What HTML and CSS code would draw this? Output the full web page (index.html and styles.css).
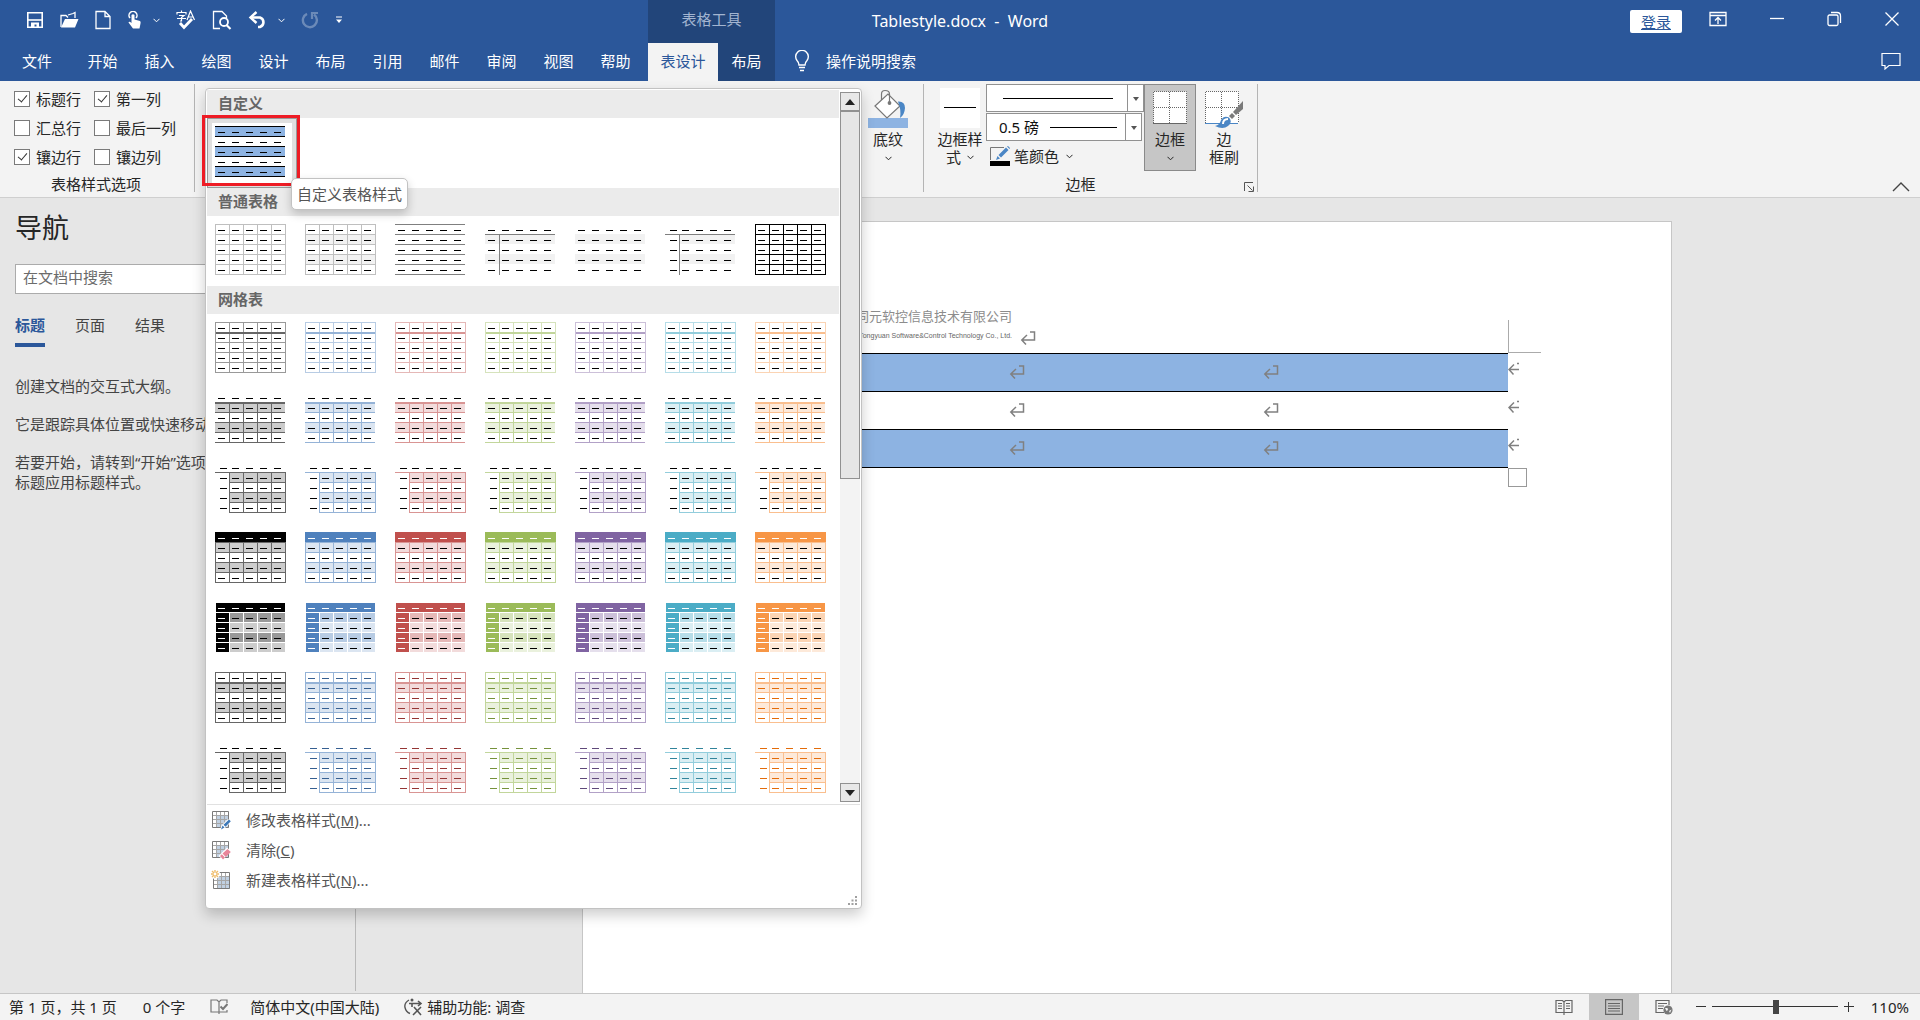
FILE: index.html
```html
<!DOCTYPE html>
<html lang="zh-CN">
<head>
    <meta charset="UTF-8">
    <meta name="viewport" content="width=device-width, initial-scale=1.0">
    <title>Tablestyle.docx - Word</title>
    <link rel="stylesheet" href="styles.css">
</head>
<body>
    <svg class="defs" aria-hidden="true">
        <symbol id="chev" viewBox="0 0 7 5"><path d="M0.5 0.8 L3.5 3.8 L6.5 0.8" fill="none" stroke="currentColor" stroke-width="1"/></symbol>
        <symbol id="ret" viewBox="0 0 16 14"><path d="M10 1 H14.5 V9 H2 M7 4 L1.8 9 L6 13.5" fill="none" stroke="#808080" stroke-width="1.5"/></symbol>
        <symbol id="rowend" viewBox="0 0 12 14"><path d="M11 7.5 H1.5 M6 2.5 L1 7.5 L5.5 12.5 M9 1.5 H11" fill="none" stroke="#808080" stroke-width="1.5"/></symbol>
        <symbol id="grid" viewBox="0 0 20 20">
            <path d="M1 1 H18 V18 H1 Z" fill="#fff"/>
            <path d="M5.500 5.500 H18 V18 H5.500 Z" fill="#c0d0e2"/>
            <path d="M1.500 5.500 H17 M1.500 9.500 H17 M1.500 13.500 H17 M5.500 1.500 V17 M9.500 1.500 V17 M13.500 1.500 V17" stroke="#a6a6a6" fill="none"/>
            <path d="M1.500 1.500 H17.500 V17.500 H1.500 Z" stroke="#7a7a7a" fill="none"/>
        </symbol>
    </svg>

    <div class="app">
        <header class="header">
            <div class="titlebar">
                <div class="title-left">
                    <div class="qat">
                        <button aria-label="保存"><svg width="18" height="18" viewBox="0 0 18 18"><path d="M1.800 1.800 H16.200 V16.200 H1.800 Z" fill="none" stroke="#fff" stroke-width="1.600"/><path d="M2 9 H16" stroke="#fff" stroke-width="1.600"/><path d="M5 17 V11.500 H13 V17 H10.500 V13.500 H8.500 V17 Z" fill="#fff"/></svg></button>
                        <button aria-label="打开"><svg width="19" height="18" viewBox="0 0 19 18"><path d="M1 16 V4.500 H6 L8 6.500 M8 4 L13 2.500 L15 1.500 V7" fill="none" stroke="#fff" stroke-width="1.300"/><path d="M1 16.500 L5 8 H18.500 L15 16.500 Z" fill="#fff"/></svg></button>
                        <button aria-label="新建"><svg width="16" height="20" viewBox="0 0 16 20"><path d="M1 1.500 H10 L15 6.500 V18.500 H1 Z M10 1.500 V6.500 H15" fill="none" stroke="#fff" stroke-width="1.300"/></svg></button>
                        <button class="split" aria-label="触摸/鼠标模式"><svg width="16" height="18" viewBox="0 0 16 18"><path d="M3 7 A4 4 0 1 1 9 7" fill="none" stroke="#fff" stroke-width="1.500"/><path d="M4.500 4 Q6 2.500 7.500 4 V8.500 L13 10 Q14 10.500 13.500 12.500 L12.500 17.500 H6 L1.500 11.500 Q2 10 4.500 12 Z" fill="#fff"/></svg><svg class="chev" width="7" height="5"><use href="#chev"/></svg></button>
                        <button aria-label="拼写和语法"><svg width="20" height="20" viewBox="0 0 20 20"><path d="M1 4.500 V2.500 H10 V4.500 M5.500 0.500 V2.500 M3 5.500 H8 L5.500 7.500 V11 H4 M1 8.500 H10 M11 10 L14.500 1 L18.500 10 M12 7 H17" fill="none" stroke="#fff" stroke-width="1.200"/><path d="M4 13 L8 17.500 L16 9" fill="none" stroke="#fff" stroke-width="2.800"/></svg></button>
                        <button aria-label="打印预览"><svg width="20" height="20" viewBox="0 0 20 20"><path d="M8 18.500 H1.500 V1.500 H10 L14.500 6 V8" fill="none" stroke="#fff" stroke-width="1.300"/><circle cx="12" cy="12" r="4" fill="none" stroke="#fff" stroke-width="1.800"/><path d="M14.500 15 L18.500 19" stroke="#fff" stroke-width="2.200"/></svg></button>
                        <button class="split" aria-label="撤消"><svg width="20" height="18" viewBox="0 0 20 18"><path d="M3 6.500 H12 A5 5 0 0 1 12 16 H10" fill="none" stroke="#fff" stroke-width="2.600"/><path d="M8.500 1 L2.500 6.500 L8.500 12" fill="none" stroke="#fff" stroke-width="2.400"/></svg><svg class="chev" width="7" height="5"><use href="#chev"/></svg></button>
                        <button class="dim" aria-label="恢复"><svg width="18" height="18" viewBox="0 0 18 18"><path d="M6 2.800 A7 7 0 1 0 13 3.500" fill="none" stroke="#fff" stroke-width="2.400"/><path d="M11 8 V2 H17" fill="none" stroke="#fff" stroke-width="2.200"/></svg></button>
                        <button aria-label="自定义快速访问工具栏"><svg width="8" height="8" viewBox="0 0 8 8"><path d="M1 1 H7" stroke="#fff"/><path d="M1 3.500 H7 L4 7 Z" fill="#fff"/></svg></button>
                    </div>
                    <div class="context-title">表格工具</div>
                </div>
                <div class="doc-title">Tablestyle.docx&nbsp; -&nbsp; Word</div>
                <div class="window-controls">
                    <button class="login">登录</button>
                    <button aria-label="功能区显示选项"><svg width="18" height="16" viewBox="0 0 18 16"><path d="M1 1.500 H17 V14.500 H1 Z M1 4.500 H17" fill="none" stroke="#fff" stroke-width="1.300"/><path d="M9 13 V7 M6 9.500 L9 6.500 L12 9.500" fill="none" stroke="#fff" stroke-width="1.300"/></svg></button>
                    <button aria-label="最小化"><svg width="14" height="14" viewBox="0 0 14 14"><path d="M0 6.500 H14" stroke="#fff" stroke-width="1.300"/></svg></button>
                    <button aria-label="还原"><svg width="15" height="16" viewBox="0 0 15 16"><rect x="1" y="4" width="10" height="10.500" rx="1.500" fill="none" stroke="#fff" stroke-width="1.300"/><path d="M4 1.500 H10 Q13.500 1.500 13.500 5 V12" fill="none" stroke="#fff" stroke-width="1.300"/></svg></button>
                    <button aria-label="关闭"><svg width="14" height="14" viewBox="0 0 14 14"><path d="M0.500 0.500 L13.500 13.500 M13.500 0.500 L0.500 13.500" stroke="#fff" stroke-width="1.300"/></svg></button>
                </div>
            </div>
            <nav class="tabs">
                <button class="file">文件</button>
                <button>开始</button>
                <button>插入</button>
                <button>绘图</button>
                <button>设计</button>
                <button>布局</button>
                <button>引用</button>
                <button>邮件</button>
                <button>审阅</button>
                <button>视图</button>
                <button>帮助</button>
                <button class="active">表设计</button>
                <button class="context">布局</button>
                <button class="tell-me"><svg width="16" height="22" viewBox="0 0 16 22"><path d="M5 15 Q5 12.500 3 10.500 A6.300 6.300 0 1 1 13 10.500 Q11 12.500 11 15 Z M5 17.500 H11 M6 20.500 H10" fill="none" stroke="#fff" stroke-width="1.400"/></svg>操作说明搜索</button>
                <button class="comment" aria-label="批注"><svg width="20" height="18" viewBox="0 0 20 18"><path d="M1 1.500 H19 V13.500 H8 L4 17 V13.500 H1 Z" fill="none" stroke="#fff" stroke-width="1.200"/></svg></button>
            </nav>
        </header>

        <section class="ribbon">
            <div class="group options">
                <div class="checks">
                    <label><input type="checkbox" checked>标题行</label>
                    <label><input type="checkbox" checked>第一列</label>
                    <label><input type="checkbox">汇总行</label>
                    <label><input type="checkbox">最后一列</label>
                    <label><input type="checkbox" checked>镶边行</label>
                    <label><input type="checkbox">镶边列</label>
                </div>
                <div class="group-name">表格样式选项</div>
            </div>

            <div class="group styles">
                <button class="big">
                    <svg width="40" height="40" viewBox="0 0 40 40"><rect y="30" width="40" height="10" fill="#8db3e2"/><path d="M7 18 L20 6 L32 18 L19 30 Z" fill="#fff" stroke="#777" stroke-width="1.200"/><path d="M13.500 12 V6 Q13.500 2.500 17 2.500 Q21.500 2.500 21.500 6 V14" fill="none" stroke="#777" stroke-width="1.200"/><circle cx="21.500" cy="15" r="1.900" fill="#777"/><path d="M30 13.500 Q37 13 37 20 Q36.500 27 32 30 Q33.500 22 30 13.500 Z" fill="#4a86c5"/></svg>
                    <span>底纹</span>
                    <svg class="chev" width="7" height="5"><use href="#chev"/></svg>
                </button>

                <div class="gallery">
                    <div class="gallery-body">
                        <div class="gallery-list">
                            <h3>自定义</h3>
                            <div class="thumbs" id="custom"></div>
                            <h3>普通表格</h3>
                            <div class="thumbs" id="plain"></div>
                            <h3>网格表</h3>
                            <div class="thumbs" id="gridTables"></div>
                        </div>
                        <div class="scrollbar">
                            <button aria-label="向上"><svg width="10" height="6" viewBox="0 0 10 6"><path d="M0 6 L5 0 L10 6 Z" fill="#222"/></svg></button>
                            <div class="scroll-thumb"></div>
                            <button aria-label="向下"><svg width="10" height="6" viewBox="0 0 10 6"><path d="M0 0 L5 6 L10 0 Z" fill="#222"/></svg></button>
                        </div>
                    </div>
                    <div class="gallery-menu">
                        <button><svg width="20" height="20" viewBox="0 0 20 20"><use href="#grid" width="20" height="20"/><path d="M9 20 L10.500 15.500 L17 9 L20 12 L13.500 18.500 Z" fill="#fff"/><path d="M10 19.500 L11.500 15.500 L13.500 17.500 Z M12.500 14.700 L18 9.500 L19.800 11.300 L14.500 16.800 Z" fill="#3c78b8"/></svg><span>修改表格样式(<u>M</u>)...</span></button>
                        <button><svg width="20" height="20" viewBox="0 0 20 20"><use href="#grid" width="20" height="20"/><path d="M7.500 16 L16 7.500 L20 11 L12 19.800 Z" fill="#fff"/><path d="M11.500 13.500 L16.500 9 L19.800 12 L14.800 17 Z M9 16 L10.800 14.300 L14 17.500 L12 19.500 Z" fill="#e8859a"/></svg><span>清除(<u>C</u>)</span></button>
                        <button><svg width="20" height="20" viewBox="0 0 20 20"><use href="#grid" x="1" y="1" width="20" height="20"/><circle cx="4" cy="4" r="5" fill="#fff"/><path d="M4 0 V8 M0 4 H8 M1 1 L7 7 M7 1 L1 7" stroke="#efbd6c" stroke-width="1.400"/><circle cx="4" cy="4" r="1.400" fill="#fff"/></svg><span>新建表格样式(<u>N</u>)...</span></button>
                    </div>
                    <svg class="grip" width="9" height="9" viewBox="0 0 9 9"><path d="M7 0 H9 V2 H7 Z M7 3.500 H9 V5.500 H7 Z M7 7 H9 V9 H7 Z M3.500 3.500 H5.500 V5.500 H3.500 Z M3.500 7 H5.500 V9 H3.500 Z M0 7 H2 V9 H0 Z" fill="#a0a0a0"/></svg>
                    <div class="marker"></div>
                    <div class="tooltip">自定义表格样式</div>
                </div>
            </div>

            <div class="group borders">
                <div class="border-tools">
                    <button class="big">
                        <svg width="40" height="40" viewBox="0 0 40 40"><rect width="40" height="40" fill="#fff"/><path d="M4 19.500 H36" stroke="#000"/></svg>
                        <span>边框样</span>
                        <span class="with-chev">式<svg class="chev" width="7" height="5"><use href="#chev"/></svg></span>
                    </button>
                    <div class="line-tools">
                        <div class="combo line"><select aria-label="线型"><option></option></select></div>
                        <div class="combo weight"><select aria-label="粗细"><option>0.5 磅</option></select></div>
                        <button class="pen"><svg width="20" height="20" viewBox="0 0 20 20"><path d="M14 1.500 H0.500 V14" fill="none" stroke="#777"/><path d="M6 14 L7.500 10 L10 12.500 Z M8.500 9 L16 1.500 L18.500 4 L11 11.500 Z M17 0.500 L18 0 L20 2 L19.500 3 Z" fill="#4a86c5"/><rect y="15" width="20" height="5" fill="#000"/></svg>笔颜色<svg class="chev" width="7" height="5"><use href="#chev"/></svg></button>
                    </div>
                    <button class="big pressed">
                        <svg width="34" height="40" viewBox="0 0 34 40"><path d="M0.500 3.500 H33.500 V35.500 H0.500 Z" fill="#fff"/><path d="M0.500 35 V3.500 H33.500 V35 M16.500 4 V35 M1 19.500 H33" fill="none" stroke="#666" stroke-dasharray="1 1"/><path d="M0 35.500 H34" stroke="#666"/></svg>
                        <span>边框</span>
                        <svg class="chev" width="7" height="5"><use href="#chev"/></svg>
                    </button>
                    <button class="big brush">
                        <svg width="38" height="40" viewBox="0 0 38 40"><path d="M0.500 3.500 H33.500 V35.500 H0.500 Z" fill="#fff"/><path d="M0.500 35 V3.500 H33.500 V35 M16.500 4 V35 M1 19.500 H33" fill="none" stroke="#666" stroke-dasharray="1 1"/><path d="M0 35.500 H33" stroke="#4a86c5"/><path d="M38 13 V21 L31 27 L28 24 Z" fill="#7a7a7a"/><path d="M27 25 L30 28 L27 31 L24 28 Z" fill="#7a7a7a"/><path d="M10 38 Q15 37 16 32 Q19 27 24 29.500 Q28 34 23 38 Q18 42 10 38 Z" fill="#4a86c5"/><path d="M18 36 Q18 31 23 31" fill="none" stroke="#fff" stroke-width="2"/></svg>
                        <span>边</span>
                        <span>框刷</span>
                    </button>
                </div>
                <div class="group-name">边框</div>
                <button class="launcher" aria-label="边框和底纹"><svg width="10" height="10" viewBox="0 0 10 10"><path d="M0.500 9 V0.500 H9 M3.500 3.500 L8.500 8.500 M9.500 4.500 V9.500 H4.500" fill="none" stroke="#555"/></svg></button>
            </div>
            <button class="collapse" aria-label="折叠功能区"><svg width="18" height="10" viewBox="0 0 18 10"><path d="M1 9 L9 1 L17 9" fill="none" stroke="#444" stroke-width="1.400"/></svg></button>
        </section>

        <main class="workspace">
            <aside class="nav-pane">
                <h2>导航</h2>
                <input type="text" placeholder="在文档中搜索" aria-label="在文档中搜索">
                <div class="nav-tabs">
                    <button class="active">标题</button>
                    <button>页面</button>
                    <button>结果</button>
                </div>
                <p>创建文档的交互式大纲。</p>
                <p>它是跟踪具体位置或快速移动内容的最佳方式。</p>
                <p>若要开始，请转到“开始”选项卡，并向文档中的标题应用标题样式。</p>
            </aside>
            <div class="document">
                <article class="page">
                    <div class="letterhead">
                        <div class="company">
                            <div class="company-cn">苏州同元软控信息技术有限公司</div>
                            <div class="company-en">Suzhou Tongyuan Software&amp;Control Technology Co., Ltd.</div>
                        </div>
                        <svg width="16" height="14"><use href="#ret"/></svg>
                    </div>
                    <div class="table-wrap">
                        <table>
                            <tr><td><svg width="16" height="14"><use href="#ret"/></svg></td><td><svg width="16" height="14"><use href="#ret"/></svg></td><td><svg width="16" height="14"><use href="#ret"/></svg></td></tr>
                            <tr><td><svg width="16" height="14"><use href="#ret"/></svg></td><td><svg width="16" height="14"><use href="#ret"/></svg></td><td><svg width="16" height="14"><use href="#ret"/></svg></td></tr>
                            <tr><td><svg width="16" height="14"><use href="#ret"/></svg></td><td><svg width="16" height="14"><use href="#ret"/></svg></td><td><svg width="16" height="14"><use href="#ret"/></svg></td></tr>
                        </table>
                        <div class="row-ends">
                            <svg width="12" height="14"><use href="#rowend"/></svg>
                            <svg width="12" height="14"><use href="#rowend"/></svg>
                            <svg width="12" height="14"><use href="#rowend"/></svg>
                        </div>
                        <div class="margin-corner"></div>
                        <div class="resize-handle"></div>
                    </div>
                </article>
            </div>
        </main>

        <footer class="status">
            <span class="pages">第 1 页，共 1 页</span>
            <span class="words">0 个字</span>
            <svg class="proof" width="18" height="16" viewBox="0 0 18 16"><path d="M9 2 V15 M9 13 H1 V1 H7 L9 3 L11 1 H17 V4 M9 13 H17 V11" fill="none" stroke="#777" stroke-width="1.200"/><path d="M10.500 7.500 L13 10 L17.500 5" fill="none" stroke="#777" stroke-width="2"/></svg>
            <span class="lang">简体中文(中国大陆)</span>
            <span class="a11y"><svg width="20" height="18" viewBox="0 0 20 18"><path d="M5 2 Q0 5 1 9.500 Q2 14 6 15.500" fill="none" stroke="#555" stroke-width="1.400"/><circle cx="8" cy="2" r="1.500" fill="#555"/><path d="M5 5.500 H17 M14 3 L17 5.500 L14 8 M8 5 V9 M10 9 L17 17 M17 9 L9 17" fill="none" stroke="#555" stroke-width="1.600"/></svg>辅助功能: 调查</span>
            <div class="views">
                <button aria-label="阅读视图"><svg width="18" height="16" viewBox="0 0 18 16"><path d="M9 2 V16 M9 13.500 H1 V1.500 H7.500 L9 3 L10.500 1.500 H17 V13.500 H9 M3 4.500 H7 M3 7 H7 M3 9.500 H7 M11 4.500 H15 M11 7 H15 M11 9.500 H15" fill="none" stroke="#666" stroke-width="1.200"/></svg></button>
                <button class="on" aria-label="页面视图"><svg width="18" height="16" viewBox="0 0 18 16"><path d="M0.600 0.600 H17.400 V15.400 H0.600 Z M3 4.500 H15 M3 7 H15 M3 9.500 H15 M3 12 H15" fill="none" stroke="#666" stroke-width="1.200"/></svg></button>
                <button aria-label="Web 版式视图"><svg width="18" height="16" viewBox="0 0 18 16"><path d="M9 13.500 H1 V1.500 H14 V6 M3 4.500 H12 M3 7 H9 M3 9.500 H8" fill="none" stroke="#666" stroke-width="1.200"/><circle cx="13" cy="11" r="4.600" fill="#777"/><path d="M10 9 L12.500 9 L13 11 L11.500 12 Z M14 12 L16.500 10.500 L15 14 Z" fill="#f3f3f3"/></svg></button>
            </div>
            <div class="zoom">
                <button aria-label="缩小"><svg width="12" height="12" viewBox="0 0 12 12"><path d="M1 5.500 H11" stroke="#333"/></svg></button>
                <input type="range" min="0" max="100" value="51" aria-label="显示比例">
                <button aria-label="放大"><svg width="12" height="12" viewBox="0 0 12 12"><path d="M1 5.500 H11 M5.500 1 V11" stroke="#333"/></svg></button>
                <span>110%</span>
            </div>
        </footer>
    </div>

    <script src="gallery.js"></script>
</body>
</html>
```

FILE: styles.css
```css
* { box-sizing: border-box; }
body { margin: 0; font-family: "Noto Sans", "Noto Sans CJK SC", sans-serif; font-size: 15px; line-height: 20px; color: #262626; }
button { padding: 0; border: none; background: none; font: inherit; color: inherit; cursor: pointer; }
svg { display: block; flex: none; }
.defs { position: absolute; width: 0; height: 0; }
.app { display: flex; flex-direction: column; height: 100vh; overflow: hidden; background: #e6e6e6; }

/* title bar and tabs */
.header { background: #2b579a; color: white; }
.titlebar { display: grid; grid-template-columns: 1fr auto 1fr; height: 43px; }
.title-left { display: flex; }
.qat { display: flex; align-items: center; gap: 16px; width: 648px; padding: 0 0 3px 26px; }
.split { display: flex; align-items: center; gap: 10px; }
.dim { opacity: 0.3; }
.context-title { width: 127px; padding-top: 9px; background: #22457a; color: #a3b5d1; text-align: center; }
.doc-title { padding-top: 11px; font-size: 16px; }
.window-controls { display: flex; justify-content: flex-end; align-items: flex-start; gap: 43px; padding: 10px 21px 0 0; }
.window-controls button { display: flex; align-items: center; height: 18px; }
.window-controls .login { height: 23px; margin-right: -16px; padding: 0 11px; background: white; color: #2b579a; border-radius: 2px; text-decoration: underline; }
.tabs { display: flex; height: 38px; }
.tabs button { width: 57px; padding-bottom: 2px; }
.tabs .file { width: 74px; }
.tabs .active { width: 70px; margin-left: 4px; background: #f3f3f3; color: #2b579a; }
.tabs .context { background: #22457a; }
.tabs .tell-me { display: flex; align-items: center; gap: 16px; width: auto; margin-left: 19px; }
.tabs .comment { display: flex; align-items: center; width: 20px; margin: 0 19px 0 auto; }

/* ribbon */
.ribbon { display: flex; height: 117px; padding: 3px 0 5px; background: #f3f3f3; border-bottom: 1px solid #cfcfcf; }
.group { position: relative; display: flex; flex-direction: column; justify-content: space-between; border-right: 1px solid #b4b4b4; }
.group-name { text-align: center; line-height: 16px; }
.options { width: 195px; }
.checks { display: grid; grid-template-columns: 80px 1fr; row-gap: 3px; padding: 2px 0 0 14px; }
.checks label { display: flex; align-items: center; gap: 6px; height: 26px; white-space: nowrap; }
.checks input { position: relative; width: 16px; height: 16px; margin: 0; appearance: none; background: white; border: 1px solid #7a7a7a; }
.checks input:checked::after { content: ""; position: absolute; left: 5px; top: 1px; width: 4px; height: 8px; border: solid #333; border-width: 0 1px 1px 0; transform: rotate(40deg); }
.options .group-name { padding-right: 2px; }
.styles { width: 729px; align-items: flex-end; padding-right: 9px; }
.big { display: flex; flex-direction: column; align-items: center; width: 52px; height: 87px; padding-top: 4px; line-height: 18px; }
.big svg + span { margin-top: 2px; }
.big .chev { margin-top: 8px; }
.big .with-chev { display: flex; align-items: center; gap: 6px; }
.big .with-chev .chev { margin-top: 0; }
.borders { width: 334px; }
.borders .group-name { padding-right: 20px; }
.border-tools { display: flex; padding-left: 10px; }
.line-tools { display: flex; flex-direction: column; gap: 1px; width: 158px; }
.pressed { background: #c6c6c6; border: 1px solid #8a8a8a; padding-top: 3px; }
.brush { margin-left: 2px; }
.combo { position: relative; height: 28px; }
.combo.weight { width: 156px; }
.combo select { width: 100%; height: 28px; padding: 0 12px; appearance: none; border: 1px solid #919191; border-radius: 0; background: linear-gradient(#000, #000) 16px 13px / 110px 1px no-repeat, white; font: inherit; color: #111; }
.combo.weight select { background: linear-gradient(#000, #000) 63px 13px / 67px 1px no-repeat, white; }
.combo::before { content: ""; position: absolute; right: 16px; top: 0; height: 28px; border-left: 1px solid #919191; }
.combo::after { content: ""; position: absolute; right: 5px; top: 13px; border: 3px solid transparent; border-top: 4px solid #555; border-bottom: 0; }
.pen { display: flex; align-items: center; gap: 4px; height: 28px; padding-left: 4px; }
.pen .chev { margin-left: 3px; }
.launcher { position: absolute; right: 3px; bottom: 0; }
.collapse { display: flex; align-items: flex-end; margin: 0 10px 0 auto; }

/* table style gallery */
.gallery { position: absolute; left: 10px; top: 4px; z-index: 5; width: 657px; padding: 1px; background: white; border: 1px solid #c2c2c2; border-radius: 4px; box-shadow: 0 6px 14px rgba(0, 0, 0, 0.2); color: #555; }
.gallery-body { display: flex; border-bottom: 1px solid #e1e1e1; }
.gallery-list { flex: 1; }
.gallery h3 { margin: 0; padding: 0 11px 2px; background: #ebebeb; font-size: 15px; font-weight: bold; line-height: 26px; color: #666; }
.thumbs { display: grid; grid-template-columns: repeat(7, 90px); }
.thumbs button { display: flex; align-items: flex-start; height: 70px; padding: 8px; }
.thumbs .selected { padding: 3px; border: 5px solid #e0e0e0; outline: 1px solid #9a9a9a; outline-offset: -1px; }
.scrollbar { display: flex; flex-direction: column; width: 20px; margin: 2px 0 2px 1px; background: #f3f3f3; }
.scrollbar button { display: flex; align-items: center; justify-content: center; height: 19px; background: #e8e8e8; border: 1px solid #919191; }
.scroll-thumb { height: 368px; margin-bottom: auto; background: #e6e6e6; border: 1px solid #919191; }
.gallery-menu { padding-bottom: 12px; }
.gallery-menu button { display: flex; align-items: center; gap: 15px; width: 100%; height: 30px; padding-left: 4px; }
.grip { position: absolute; right: 4px; bottom: 3px; }
.marker { position: absolute; left: -4px; top: 26px; width: 98px; height: 71px; border: 3px solid #ee1c25; }
.tooltip { position: absolute; left: 85px; top: 89px; padding: 5px 5px; background: white; border: 1px solid #c2c2c2; border-radius: 5px; box-shadow: 0 4px 10px rgba(0, 0, 0, 0.2); }

/* navigation pane */
.workspace { display: flex; flex: 1; min-height: 0; }
.nav-pane { width: 356px; margin-bottom: 2px; padding: 14px 20px 0 15px; border-right: 1px solid #b9b9b9; color: #444; }
.nav-pane h2 { margin: 0 0 20px; font-size: 27px; font-weight: normal; line-height: 32px; color: #262626; }
.nav-pane input { display: block; width: 100%; height: 30px; padding: 0 7px 4px; border: 1px solid #ababab; background: white; font: inherit; }
.nav-pane input::placeholder { color: #6b6b6b; }
.nav-tabs { display: flex; gap: 30px; margin: 20px 0 29px; }
.nav-tabs button { height: 33px; padding-bottom: 12px; }
.nav-tabs .active { border-bottom: 4px solid #2b579a; color: #2b579a; font-weight: bold; padding-bottom: 8px; }
.nav-pane p { margin: 0 0 18px; }

/* document */
.document { flex: 1; padding: 23px 22px 0 0; overflow: hidden; }
.page { width: 1090px; height: 100%; margin: 0 auto; padding: 84px 163px 0; background: white; border: 1px solid #c6c6c6; border-bottom: none; }
.letterhead { display: flex; align-items: flex-end; gap: 8px; margin-bottom: 7px; }
.letterhead svg { margin-bottom: 1px; }
.company { width: 266px; text-align: right; white-space: nowrap; color: #8c8c8c; }
.company-cn { font-size: 13px; }
.company-en { font-family: "Liberation Sans", sans-serif; font-size: 7px; color: #666; }
.table-wrap { position: relative; }
.page table { width: 100%; border-collapse: collapse; table-layout: fixed; }
.page td { height: 38px; padding: 0 0 2px 9px; border: solid #000; border-width: 1px 0; }
.page tr:nth-child(odd) { background: #8db3e2; }
.row-ends { position: absolute; left: 100%; top: 9px; display: flex; flex-direction: column; gap: 24px; }
.margin-corner { position: absolute; left: 100%; bottom: 100%; width: 33px; height: 33px; border: solid #ababab; border-width: 0 0 1px 1px; }
.resize-handle { position: absolute; left: 100%; top: 100%; width: 19px; height: 19px; border: 1px solid #999; background: white; }

/* status bar */
.status { display: flex; align-items: center; height: 27px; padding-left: 9px; background: #f3f3f3; border-top: 1px solid #c6c6c6; white-space: nowrap; }
.words { margin-left: 26px; }
.proof { margin-left: 25px; }
.lang { margin-left: 22px; }
.a11y { display: flex; align-items: center; gap: 3px; margin-left: 25px; }
.views { display: flex; height: 100%; margin-left: auto; }
.views button { display: flex; align-items: center; justify-content: center; width: 50px; }
.views .on { background: #c6c6c6; }
.zoom { display: flex; align-items: center; gap: 5px; margin-left: 6px; padding-right: 11px; }
.zoom input { width: 126px; height: 16px; margin: 0; appearance: none; background: linear-gradient(#333, #333) 0 7px / 100% 1px no-repeat; }
.zoom input::-webkit-slider-thumb { appearance: none; width: 6px; height: 14px; background: #444; }
.zoom span { margin-left: 11px; }
```

FILE: gallery.js
```js
// theme colours: base, line, light line, band fill, text
const themes = [
    { base: '#000000', line: '#666666', soft: '#999999', band: '#cccccc', text: '#000000' },
    { base: '#4f81bd', line: '#95b3d7', soft: '#b8cce4', band: '#dbe5f1', text: '#365f91' },
    { base: '#c0504d', line: '#d99594', soft: '#e5b8b7', band: '#f2dbdb', text: '#943634' },
    { base: '#9bbb59', line: '#c2d69b', soft: '#d6e3bc', band: '#eaf1dd', text: '#76923c' },
    { base: '#8064a2', line: '#b2a1c7', soft: '#ccc0d9', band: '#e5dfec', text: '#5f497a' },
    { base: '#4bacc6', line: '#92cddc', soft: '#b6dde8', band: '#daeef3', text: '#31849b' },
    { base: '#f79646', line: '#fabf8f', soft: '#fbd4b4', band: '#fde9d9', text: '#e36c0a' }
];

// every preview is 5 x 5 cells, one cell is 14 x 10
const W = 14, H = 10;

function rect(x, y, w, h, fill) {
    return `<rect x="${x}" y="${y}" width="${w}" height="${h}" fill="${fill}"/>`;
}

function bands(rows, fill, col = 0) {
    return rows.map(r => rect(col * W, r * H, (5 - col) * W, H, fill)).join('');
}

function hLines(from, to, color, col = 0) {
    let s = '';
    for (let r = from; r <= to; r++) s += rect(col * W, r * H, (5 - col) * W, 1, color);
    return s;
}

function vLines(from, to, color, row = 0) {
    let s = '';
    for (let c = from; c <= to; c++) s += rect(c * W, row * H, 1, (5 - row) * H + 1, color);
    return s;
}

function dashes(color, shift = 0, head = color, first = color) {
    let s = '';
    for (let r = 0; r < 5; r++) {
        for (let c = 0; c < 5; c++) {
            const fill = r === 0 ? head : c === 0 ? first : color;
            s += rect(c * W + 3 + (c === 0 ? shift : 0), r * H + 6, 7, 1, fill);
        }
    }
    return s;
}

function addThumb(id, name, drawing, selected) {
    const btn = document.createElement('button');
    btn.setAttribute('aria-label', name);
    if (selected) btn.className = 'selected';
    btn.innerHTML = `<svg width="71" height="51" viewBox="0 0 71 51" shape-rendering="crispEdges">${drawing}</svg>`;
    document.getElementById(id).appendChild(btn);
}

function fullGrid(color) {
    return hLines(0, 5, color) + vLines(0, 5, color);
}

addThumb('custom', '自定义表格样式', bands([0, 2, 4], '#8db3e2') + hLines(0, 5, '#000') + dashes('#000'), true);

const gray = '#bfbfbf', mid = '#7f7f7f', pale = '#f2f2f2';
[
    fullGrid(gray) + dashes('#000'),
    bands([1, 3], pale) + fullGrid(gray) + dashes('#000'),
    hLines(0, 5, mid) + dashes('#000'),
    bands([1, 3], pale) + hLines(1, 1, mid) + vLines(1, 1, mid, 1) + dashes('#000'),
    bands([1, 3], pale) + dashes('#000'),
    bands([1, 3], pale, 1) + hLines(1, 1, mid) + vLines(1, 1, mid, 1) + dashes('#000', 2),
    fullGrid('#000') + dashes('#000')
].forEach((d, i) => addThumb('plain', '普通表格 ' + (i + 1), d));

function sideGrid(t, text) {
    return bands([1, 3], t.band, 1) + hLines(1, 1, t.line) + hLines(2, 5, t.line, 1) + vLines(1, 5, t.line, 1) + dashes(text, 2);
}

function darkGrid(t) {
    let s = rect(1, 1, 69, 9, t.base);
    for (let r = 1; r < 5; r++) {
        for (let c = 0; c < 5; c++) {
            const fill = c === 0 ? t.base : r % 2 ? t.soft : t.band;
            s += rect(c * W + 1, r * H + 1, 13, 9, fill);
        }
    }
    return s + dashes('#000', 0, '#fff', '#fff');
}

const gridStyles = [
    t => fullGrid(t.soft) + rect(1, 10, 69, 2, t.line) + dashes('#000'),
    t => bands([1, 3], t.band) + hLines(1, 5, t.line) + rect(0, 10, 70, 2, t.line) + vLines(1, 4, t.line, 1) + dashes('#000'),
    t => sideGrid(t, '#000'),
    t => bands([1, 3], t.band) + hLines(1, 5, t.line) + vLines(0, 5, t.line, 1) + rect(0, 0, 71, 10, t.base) + dashes('#000', 0, '#fff'),
    darkGrid,
    t => bands([1, 3], t.band) + fullGrid(t.line) + rect(0, 10, 71, 2, t.line) + dashes(t.text),
    t => sideGrid(t, t.text)
];

gridStyles.forEach((draw, row) => {
    themes.forEach((t, col) => addThumb('gridTables', `网格表 ${row + 1}-${col + 1}`, draw(t)));
});
```
